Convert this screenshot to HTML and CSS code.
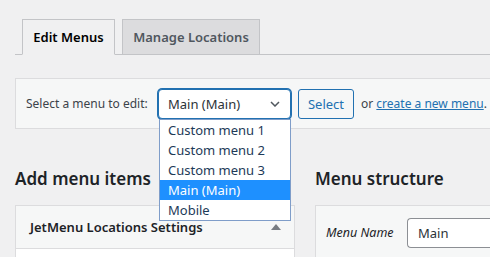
FILE: index.html
```html
<!DOCTYPE html>
<html>
<head>
<meta charset="utf-8">
<link rel="stylesheet" href="styles.css">
</head>
<body>
<div class="wrap">
  <nav class="tabs">
    <a class="tab active">Edit Menus</a>
    <a class="tab">Manage Locations</a>
  </nav>
  <div class="manage">
    <span class="label">Select a menu to edit:</span>
    <div class="select-wrap">
      <div class="select">
        <span>Main (Main)</span>
        <svg class="chev" width="10" height="6" viewBox="0 0 10 6"><path d="M1 1l4 4 4-4" fill="none" stroke="#50575e" stroke-width="1.5"/></svg>
      </div>
      <ul class="dropdown">
        <li>Custom menu 1</li>
        <li>Custom menu 2</li>
        <li>Custom menu 3</li>
        <li class="hl">Main (Main)</li>
        <li>Mobile</li>
      </ul>
    </div>
    <button class="btn">Select</button>
    <span class="or">or <a class="link">create a new menu</a>.</span>
  </div>
  <div class="cols">
    <div class="left">
      <h2>Add menu items</h2>
      <div class="box">
        <div class="box-head">
          <span>JetMenu Locations Settings</span>
          <span class="tri"></span>
        </div>
        <div class="box-body"></div>
      </div>
    </div>
    <div class="right">
      <h2>Menu structure</h2>
      <div class="struct">
        <label>Menu Name</label>
        <div class="input">Main</div>
      </div>
    </div>
  </div>
</div>
</body>
</html>
```
FILE: styles.css
```css
* { box-sizing: border-box; }
html, body { margin: 0; padding: 0; }
body {
  background: #f0f0f1;
  font-family: "Noto Sans", "Open Sans", sans-serif;
  font-size: 12px;
  color: #3c434a;
  width: 490px;
  height: 257px;
  overflow: hidden;
}
.wrap { padding-left: 15px; width: 490px; }
.tabs {
  display: flex;
  gap: 7px;
  padding: 19px 0 0 7px;
  border-bottom: 1px solid #c3c4c7;
}
.tab {
  display: block;
  height: 36px;
  margin-bottom: -1px;
  border: 1px solid #c3c4c7;
  background: #dcdcde;
  font-size: 13px;
  font-weight: 600;
  color: #50575e;
  line-height: 34px;
  text-align: center;
  white-space: nowrap;
  padding: 0;
}
.tab.active {
  background: #f0f0f1;
  border-bottom-color: #f0f0f1;
  color: #000;
  width: 93px;
}
.tab:not(.active) { width: 138px; }
.manage {
  margin-top: 23px;
  height: 51px;
  background: #f6f7f7;
  border: 1px solid #dcdcde;
  border-right: none;
  display: flex;
  align-items: center;
  padding-left: 10px;
  white-space: nowrap;
}
.label { width: 132px; }
.select-wrap { position: relative; }
.select {
  width: 133px;
  height: 30px;
  border: 1px solid #2271b1;
  box-shadow: 0 0 0 1px #2271b1;
  border-radius: 4px;
  background: #fff;
  display: flex;
  align-items: center;
  justify-content: space-between;
  padding: 0 10px 0 9px;
  font-size: 13px;
  color: #2c3338;
}
.chev { display: block; }
.dropdown {
  position: absolute;
  left: 1px;
  top: 30px;
  width: 132px;
  margin: 0;
  padding: 0;
  list-style: none;
  background: #fff;
  border: 1px solid #7f9dc9;
  z-index: 5;
}
.dropdown li {
  height: 20px;
  line-height: 20px;
  padding-left: 8px;
  font-size: 13px;
  color: #1d3a58;
}
.dropdown li.hl { background: #1e90ff; color: #fff; }
.btn {
  margin-left: 7px;
  width: 56px;
  height: 30px;
  border: 1px solid #2271b1;
  border-radius: 3px;
  background: #f6f7f7;
  color: #2271b1;
  font-family: inherit;
  font-size: 13px;
  padding: 0;
}
.or { margin-left: 7px; }
.link { color: #2271b1; text-decoration: underline; }
.cols {
  display: flex;
  gap: 20px;
  margin-top: 38px;
}
.left { width: 280px; flex: none; }
.right { flex: 1; min-width: 0; }
h2 {
  margin: 0 0 14px;
  font-size: 17px;
  font-weight: 600;
  line-height: 24px;
  color: #1d2327;
  white-space: nowrap;
}
.box {
  border: 1px solid #dcdcde;
  background: #fff;
  height: 60px;
}
.box-head {
  height: 43px;
  background: #f6f7f7;
  border-bottom: 1px solid #dcdcde;
  display: flex;
  align-items: center;
  justify-content: space-between;
  padding: 0 13px 0 14px;
  font-size: 13px;
  font-weight: 600;
  color: #1d2327;
}
.tri {
  width: 0; height: 0;
  border-left: 5px solid transparent;
  border-right: 5px solid transparent;
  border-bottom: 6px solid #787c82;
}
.struct {
  background: #f6f7f7;
  border: 1px solid #dcdcde;
  border-right: none;
  height: 60px;
  display: flex;
  align-items: flex-start;
  padding: 12px 0 0 10px;
}
.struct label {
  font-style: italic;
  font-size: 12.5px;
  color: #1d2327;
  width: 81px;
  line-height: 30px;
  white-space: nowrap;
}
.input {
  flex: 1;
  height: 30px;
  border: 1px solid #8c8f94;
  border-right: none;
  border-radius: 4px 0 0 4px;
  background: #fff;
  padding-left: 10px;
  line-height: 28px;
  font-size: 13px;
  color: #2c3338;
}
```
